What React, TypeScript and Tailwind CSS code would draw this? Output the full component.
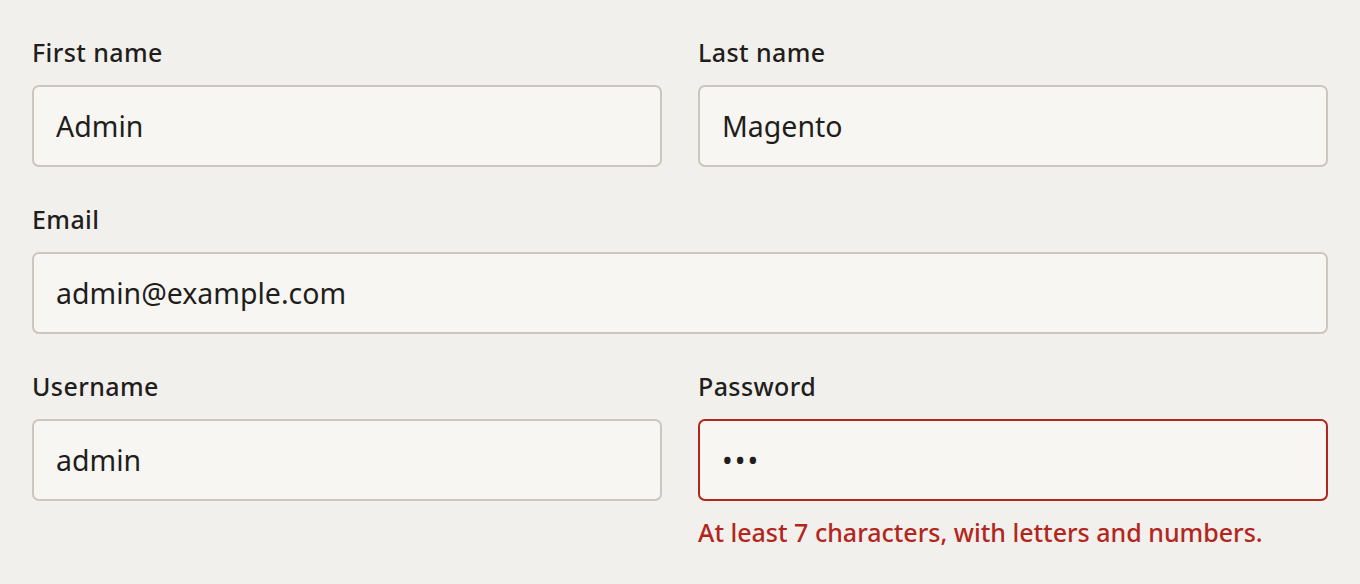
import React from 'react'

const font = { fontFamily: '"Noto Sans", "Open Sans", sans-serif' }

function Field({
  label,
  value,
  type = 'text',
  error,
}: {
  label: string
  value: string
  type?: string
  error?: string
}) {
  return (
    <div className="flex flex-col">
      <label className="text-[25px] leading-[32px] font-medium tracking-[0.4px] text-[#1f1e1c] mb-[17px]">
        {label}
      </label>
      <input
        readOnly
        type={type}
        value={value}
        className={
          error
            ? 'h-[82px] w-full rounded-[7px] border-2 border-[#b3261e] bg-[#f7f6f3] px-[22px] text-[28.5px] tracking-[2px] text-[#1f1e1c] outline-none'
            : 'h-[82px] w-full rounded-[7px] border-2 border-[#ccc6bd] bg-[#f7f6f3] px-[22px] text-[28.5px] text-[#1f1e1c] outline-none'
        }
        style={font}
      />
      {error && (
        <p className="mt-[13px] text-[25px] leading-[36px] font-medium text-[#b3261e]">{error}</p>
      )}
    </div>
  )
}

export default function App() {
  return (
    <div className="min-h-screen w-full bg-[#f2f0ec] px-8 pt-[36px]" style={font}>
      <div className="grid grid-cols-2 gap-x-9 gap-y-9">
        <Field label="First name" value="Admin" />
        <Field label="Last name" value="Magento" />
        <div className="col-span-2">
          <Field label="Email" value="admin@example.com" />
        </div>
        <Field label="Username" value="admin" />
        <Field
          label="Password"
          value="abc"
          type="password"
          error="At least 7 characters, with letters and numbers."
        />
      </div>
    </div>
  )
}
